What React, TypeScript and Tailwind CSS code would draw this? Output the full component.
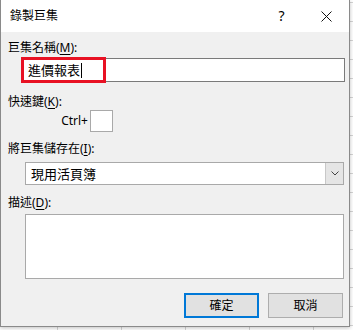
const Key = ({ children }: { children: string }) => (
  <span className="underline underline-offset-2">{children}</span>
);

const App = () => {
  return (
    <div
      className="relative h-[330px] w-[353px] overflow-hidden bg-white bg-[linear-gradient(to_right,#d4d4d4_1px,transparent_1px),linear-gradient(to_bottom,#d4d4d4_1px,transparent_1px)] bg-[size:64px_19px] bg-[position:57px_2px] text-black"
      style={{ fontFamily: '"Noto Sans", "Noto Sans CJK TC", sans-serif' }}
    >
      <div className="flex h-[327px] w-[350px] flex-col border-x border-b border-[#8a8a8a] bg-[#f0f0f0] shadow-[0_1px_4px_rgba(0,0,0,0.25)]">
        {/* title bar */}
        <div className="flex h-[32px] items-center bg-white">
          <div className="flex-1 pl-[9px] text-[12px] leading-[16px]">錄製巨集</div>
          <div className="flex w-[45px] items-center justify-center text-[14px] leading-[16px]">?</div>
          <div className="flex w-[45px] items-center justify-center">
            <svg width="11" height="11" viewBox="0 0 11 11">
              <path d="M0.5 0.5L10.5 10.5M10.5 0.5L0.5 10.5" stroke="#111" strokeWidth="1" />
            </svg>
          </div>
        </div>

        {/* body */}
        <div className="flex flex-col text-[12px] leading-[16px]">
          <div className="ml-[7px] mt-[8px]">
            巨集名稱(<Key>M</Key>):
          </div>

          <div className="relative ml-[21px] mt-[2px] flex h-[24px] w-[323px] items-center border border-[#7a7a7a] bg-white pl-[5px] text-[13px]">
            <span>進價報表</span>
            <span className="ml-[1px] inline-block h-[15px] w-[1px] bg-black" />
            <div className="absolute left-[-2px] top-[-2px] h-[26px] w-[85px] border-[3px] border-[#e81123]" />
          </div>

          <div className="ml-[7px] mt-[12px]">
            快速鍵(<Key>K</Key>):
          </div>

          <div className="flex h-[22px] items-center">
            <div className="w-[87px] text-right">Ctrl+</div>
            <div className="ml-[2px] h-[22px] w-[23px] border border-[#a9a9a9] bg-white" />
          </div>

          <div className="ml-[7px] mt-[9px]">
            將巨集儲存在(<Key>I</Key>):
          </div>

          <div className="ml-[24px] mt-[5px] flex h-[23px] w-[319px] border border-[#a9a9a9] bg-white">
            <div className="flex flex-1 items-center pl-[5px] text-[13px]">現用活頁簿</div>
            <div className="flex w-[18px] items-center justify-center border-l border-[#c8c8c8] bg-[#e5e5e5]">
              <svg width="8" height="5" viewBox="0 0 8 5">
                <path d="M0.5 0.5L4 4L7.5 0.5" fill="none" stroke="#444" strokeWidth="1" />
              </svg>
            </div>
          </div>

          <div className="ml-[7px] mt-[10px]">
            描述(<Key>D</Key>):
          </div>

          <div className="ml-[24px] mt-[3px] h-[65px] w-[319px] border border-[#a9a9a9] bg-white" />

          <div className="ml-[183px] mt-[14px] flex gap-[9px]">
            <button className="flex h-[25px] w-[75px] items-center justify-center border-2 border-[#0078d7] bg-[#e1e1e1] text-[12px]">
              確定
            </button>
            <button className="flex h-[25px] w-[75px] items-center justify-center border border-[#adadad] bg-[#e1e1e1] text-[12px]">
              取消
            </button>
          </div>
        </div>
      </div>
    </div>
  );
};

export default App;
